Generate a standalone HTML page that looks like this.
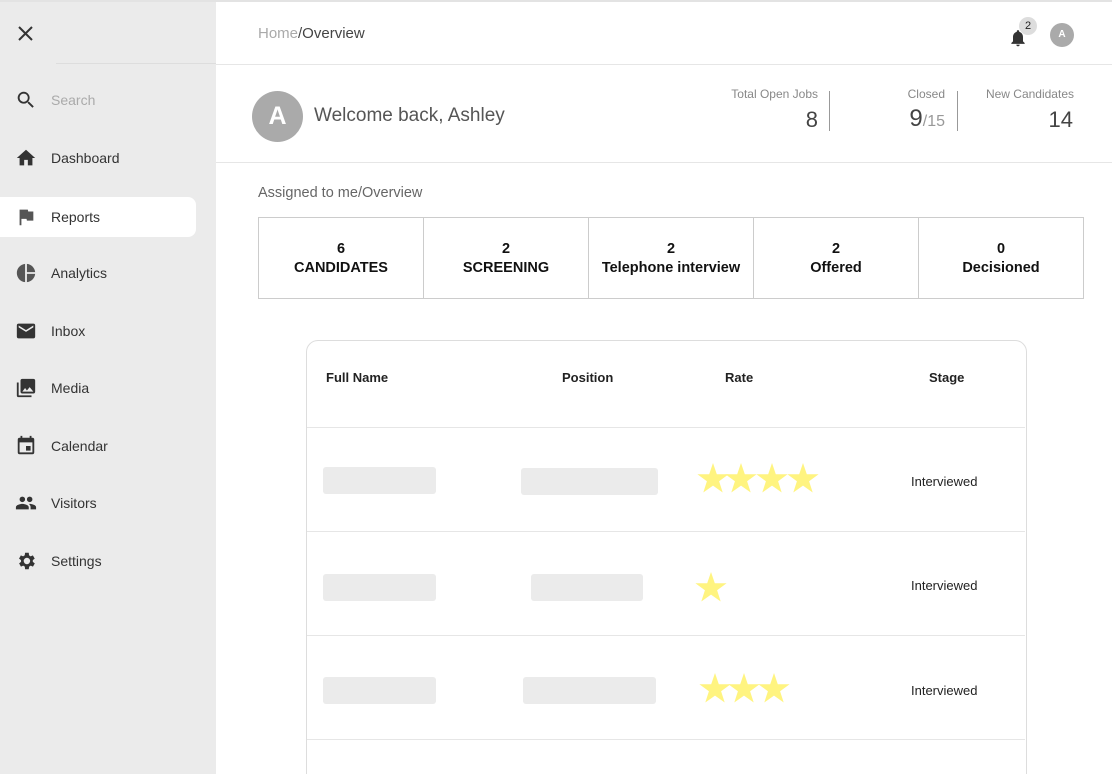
<!DOCTYPE html>
<html style="width:1112px;height:774px;overflow:hidden"><head><style>
*{margin:0;padding:0;box-sizing:border-box}
body{width:1112px;height:774px;overflow:hidden;background:#fff;font-family:"Liberation Sans",sans-serif;color:#222}
#wrap{position:relative;width:1112px;height:774px;overflow:hidden}
.a{position:absolute}
#side{left:0;top:0;width:216px;height:774px;background:#ebebeb}
.nav{position:absolute;left:0;width:196px;height:40px;display:flex;align-items:center;font-size:14px;color:#333}
.nav svg{position:absolute;left:15px;width:22px;height:22px}
.nav span{position:absolute;left:51px}
.sel{background:#fff;border-radius:0 8px 8px 0}
.box{position:absolute;top:217px;height:82px;border:1px solid #ccc;text-align:center;font-size:14.5px;font-weight:bold;line-height:19px;padding-top:22px;color:#111}
.ph{position:absolute;height:27px;background:#ebebeb;border-radius:3px}
.hline{position:absolute;left:307px;width:718px;height:1px;background:#e6e6e6}
.st{position:absolute;font-size:13px;color:#222}
</style></head><body><div id="wrap">
<div class="a" id="side"></div>
<div class="a" style="left:0;top:0;width:1112px;height:2px;background:#e3e3e3"></div>
<svg class="a" style="left:17px;top:25px" width="17" height="17" viewBox="0 0 17 17"><path d="M2 2L15 15M15 2L2 15" stroke="#333" stroke-width="2"/></svg>
<div class="a" style="left:56px;top:63px;width:160px;height:1px;background:#ddd"></div>
<div class="nav" style="top:80px;color:#aaa"><svg viewBox="0 0 24 24"><path fill="#333" d="M15.5 14h-.8l-.3-.3A6.5 6.5 0 1 0 9.5 16a6.5 6.5 0 0 0 4.2-1.6l.3.3v.8l5 5 1.5-1.5-5-5zm-6 0A4.5 4.5 0 1 1 14 9.5 4.5 4.5 0 0 1 9.5 14z"/></svg><span>Search</span></div>
<div class="nav" style="top:138px"><svg viewBox="0 0 24 24"><path fill="#333" d="M10 20v-6h4v6h5v-8h3L12 3 2 12h3v8z"/></svg><span>Dashboard</span></div>
<div class="nav sel" style="top:197px"><svg viewBox="0 0 24 24"><path fill="#555" d="M14.4 6L14 4H5v17h2v-7h5.6l.4 2h7V6z"/></svg><span>Reports</span></div>
<div class="nav" style="top:253px"><svg viewBox="0 0 24 24"><path fill="#555" d="M11 2v20c-5.1-.5-9-4.8-9-10s3.9-9.5 9-10zm2 0v9h9c-.5-4.8-4.2-8.5-9-9zm0 11v9c4.8-.5 8.5-4.2 9-9z"/></svg><span>Analytics</span></div>
<div class="nav" style="top:311px"><svg viewBox="0 0 24 24"><path fill="#333" d="M20 4H4a2 2 0 0 0-2 2v12a2 2 0 0 0 2 2h16a2 2 0 0 0 2-2V6a2 2 0 0 0-2-2zm0 4l-8 5-8-5V6l8 5 8-5z"/></svg><span>Inbox</span></div>
<div class="nav" style="top:368px"><svg viewBox="0 0 24 24"><path fill="#333" d="M22 16V4a2 2 0 0 0-2-2H8a2 2 0 0 0-2 2v12a2 2 0 0 0 2 2h12a2 2 0 0 0 2-2zm-11-4l2 2.7 3-3.7 4 5H8zM2 6v14a2 2 0 0 0 2 2h14v-2H4V6z"/></svg><span>Media</span></div>
<div class="nav" style="top:426px"><svg viewBox="0 0 24 24"><path fill="#333" d="M17 12h-5v5h5zM16 1v2H8V1H6v2H5a2 2 0 0 0-2 2v14a2 2 0 0 0 2 2h14a2 2 0 0 0 2-2V5a2 2 0 0 0-2-2h-1V1zm3 18H5V8h14z"/></svg><span>Calendar</span></div>
<div class="nav" style="top:483px"><svg viewBox="0 0 24 24"><path fill="#333" d="M16 11a3 3 0 1 0-3-3 3 3 0 0 0 3 3zm-8 0a3 3 0 1 0-3-3 3 3 0 0 0 3 3zm0 2c-2.3 0-7 1.2-7 3.5V19h14v-2.5C15 14.2 10.3 13 8 13zm8 0h-1c1.2.8 2 2 2 3.5V19h6v-2.5c0-2.3-4.7-3.5-7-3.5z"/></svg><span>Visitors</span></div>
<div class="nav" style="top:541px"><svg viewBox="0 0 24 24"><path fill="#333" d="M19.4 13a7.5 7.5 0 0 0 0-2l2.1-1.6-2-3.5-2.5 1a7.3 7.3 0 0 0-1.7-1L15 3h-4l-.4 2.9a7.3 7.3 0 0 0-1.7 1l-2.5-1-2 3.5L6.6 11a7.5 7.5 0 0 0 0 2l-2.1 1.6 2 3.5 2.5-1a7.3 7.3 0 0 0 1.7 1L11 21h4l.4-2.9a7.3 7.3 0 0 0 1.7-1l2.5 1 2-3.5zM13 15.5a3.5 3.5 0 1 1 3.5-3.5 3.5 3.5 0 0 1-3.5 3.5z"/></svg><span>Settings</span></div>

<div class="a" style="left:216px;top:64px;width:896px;height:1px;background:#e6e6e6"></div>
<div class="a" style="left:258px;top:25px;font-size:15px;color:#aaa">Home<span style="color:#444">/Overview</span></div>
<svg class="a" style="left:1008px;top:28px" width="20" height="20" viewBox="0 0 24 24"><path fill="#333" d="M12 22a2 2 0 0 0 2-2h-4a2 2 0 0 0 2 2zm6-6v-5c0-3.1-1.6-5.6-4.5-6.3V4a1.5 1.5 0 0 0-3 0v.7C7.6 5.4 6 7.9 6 11v5l-2 2v1h16v-1z"/></svg>
<div class="a" style="left:1019px;top:17px;width:18px;height:18px;border-radius:50%;background:#ddd;font-size:11px;text-align:center;line-height:18px">2</div>
<div class="a" style="left:1050px;top:23px;width:24px;height:24px;border-radius:50%;background:#aaa;color:#fff;font-size:10px;font-weight:bold;text-align:center;line-height:24px">A</div>

<div class="a" style="left:252px;top:91px;width:51px;height:51px;border-radius:50%;background:#aaa;color:#fff;font-size:25px;font-weight:bold;text-align:center;line-height:51px">A</div>
<div class="a" style="left:314px;top:105px;font-size:19px;color:#555">Welcome back, Ashley</div>
<div class="a" style="left:700px;top:87px;width:118px;text-align:right;font-size:12px;color:#888">Total Open Jobs</div>
<div class="a" style="left:700px;top:107px;width:118px;text-align:right;font-size:22px;color:#444">8</div>
<div class="a" style="left:829px;top:91px;width:1px;height:40px;background:#999"></div>
<div class="a" style="left:840px;top:87px;width:105px;text-align:right;font-size:12px;color:#888">Closed</div>
<div class="a" style="left:840px;top:105px;width:105px;text-align:right;font-size:24px;color:#444">9<span style="font-size:16px;color:#999">/15</span></div>
<div class="a" style="left:957px;top:91px;width:1px;height:40px;background:#999"></div>
<div class="a" style="left:960px;top:87px;width:114px;text-align:right;font-size:12px;color:#888">New Candidates</div>
<div class="a" style="left:960px;top:107px;width:113px;text-align:right;font-size:22px;color:#444">14</div>
<div class="a" style="left:216px;top:162px;width:896px;height:1px;background:#e6e6e6"></div>

<div class="a" style="left:258px;top:185px;font-size:14.5px;color:#666">Assigned to me/Overview</div>
<div class="box" style="left:258px;width:166px">6<br>CANDIDATES</div>
<div class="box" style="left:423px;width:166px">2<br>SCREENING</div>
<div class="box" style="left:588px;width:166px">2<br>Telephone interview</div>
<div class="box" style="left:753px;width:166px">2<br>Offered</div>
<div class="box" style="left:918px;width:166px">0<br>Decisioned</div>

<div class="a" style="left:306px;top:340px;width:721px;height:460px;border:1px solid #ddd;border-radius:12px"></div>
<div class="a" style="left:326px;top:370px;font-size:13px;font-weight:bold">Full Name</div>
<div class="a" style="left:562px;top:370px;font-size:13px;font-weight:bold">Position</div>
<div class="a" style="left:725px;top:370px;font-size:13px;font-weight:bold">Rate</div>
<div class="a" style="left:929px;top:370px;font-size:13px;font-weight:bold">Stage</div>
<div class="hline" style="top:427px"></div>
<div class="hline" style="top:531px"></div>
<div class="hline" style="top:635px"></div>
<div class="hline" style="top:739px"></div>

<div class="ph" style="left:323px;top:467px;width:113px"></div>
<div class="ph" style="left:521px;top:468px;width:137px"></div>
<div class="ph" style="left:323px;top:574px;width:113px"></div>
<div class="ph" style="left:531px;top:574px;width:112px"></div>
<div class="ph" style="left:323px;top:677px;width:113px"></div>
<div class="ph" style="left:523px;top:677px;width:133px"></div>

<svg width="0" height="0" style="position:absolute"><defs><path id="s" d="M16 0l3.8 11.2H31.6l-9.5 7 3.6 11.3L16 22.6 6.3 29.5l3.6-11.3-9.5-7H12.2z" fill="#fff480"/></defs></svg>
<svg class="a" style="left:697px;top:463px" width="125" height="32"><use href="#s"/><use href="#s" x="28"/><use href="#s" x="59"/><use href="#s" x="90"/></svg>
<svg class="a" style="left:695px;top:572px" width="32" height="32"><use href="#s"/></svg>
<svg class="a" style="left:699px;top:673px" width="95" height="32"><use href="#s"/><use href="#s" x="29"/><use href="#s" x="59"/></svg>

<div class="st" style="left:911px;top:474px">Interviewed</div>
<div class="st" style="left:911px;top:578px">Interviewed</div>
<div class="st" style="left:911px;top:683px">Interviewed</div>
</div></body></html>
